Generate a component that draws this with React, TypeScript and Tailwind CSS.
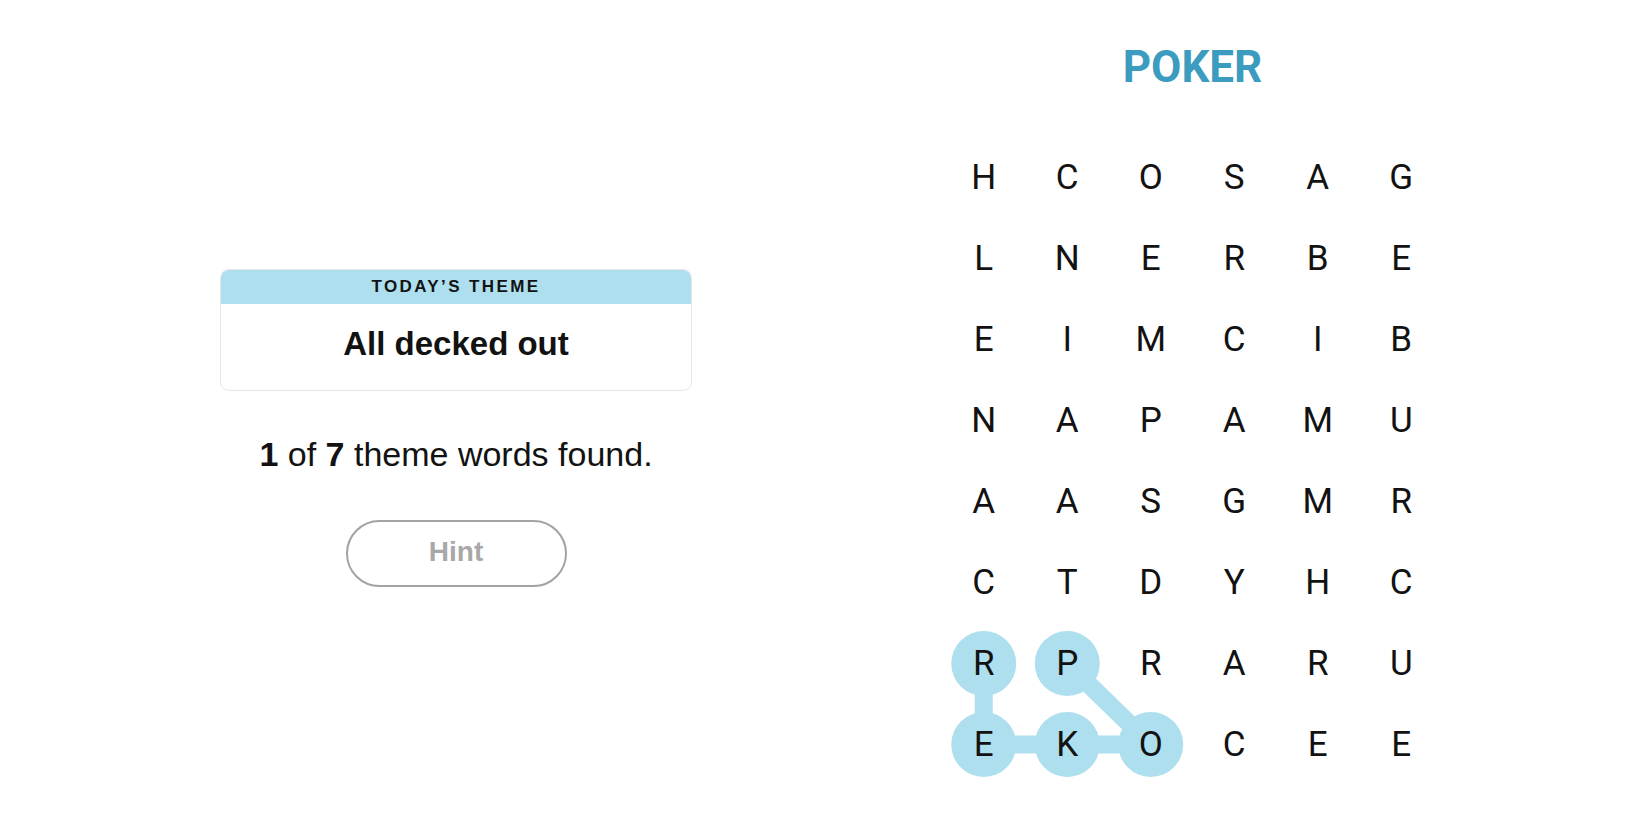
import React from 'react'

const grid = [
  ['H', 'C', 'O', 'S', 'A', 'G'],
  ['L', 'N', 'E', 'R', 'B', 'E'],
  ['E', 'I', 'M', 'C', 'I', 'B'],
  ['N', 'A', 'P', 'A', 'M', 'U'],
  ['A', 'A', 'S', 'G', 'M', 'R'],
  ['C', 'T', 'D', 'Y', 'H', 'C'],
  ['R', 'P', 'R', 'A', 'R', 'U'],
  ['E', 'K', 'O', 'C', 'E', 'E']
]

const COL = 83.5
const ROW = 81

// found word path: P O K E R  as [row, col]
const found: [number, number][] = [
  [6, 1],
  [7, 2],
  [7, 1],
  [7, 0],
  [6, 0]
]

const cx = (c: number) => c * COL + COL / 2
const cy = (r: number) => r * ROW + ROW / 2

const App: React.FC = () => {
  return (
    <div className="min-h-screen w-full bg-white text-[#121212] flex" style={{ fontFamily: '"Liberation Sans", Arial, sans-serif' }}>
      {/* Left panel */}
      <div className="ml-[220px] w-[472px] pt-[269px] flex flex-col items-center">
        <div className="w-full rounded-[9px] border border-[#e6e6e6] overflow-hidden">
          <div className="h-[34px] bg-[#aedfee] flex items-center justify-center text-[17px] font-semibold tracking-[2.4px] text-[#121212]">
            TODAY’S THEME
          </div>
          <div className="h-[86px] pb-[6px] flex items-center justify-center text-[33px] font-bold">All decked out</div>
        </div>
        <p className="mt-[43px] text-[34px] leading-[40px]">
          <span className="font-bold">1</span> of <span className="font-bold">7</span> theme words found.
        </p>
        <button className="mt-[46px] w-[221px] h-[67px] pb-[3px] rounded-full border-2 border-[#a3a3a3] text-[28px] font-bold text-[#a8a8a8]">
          Hint
        </button>
      </div>

      {/* Right panel */}
      <div className="ml-[250px] flex flex-col items-center" style={{ fontFamily: 'Roboto, "Liberation Sans", sans-serif' }}>
        <h1 className="pt-[41px] text-[44px] leading-[52px] font-bold text-[#3c9cc0]">POKER</h1>
        <div className="relative mt-[44px]">
          <svg className="absolute inset-0" width={COL * 6} height={ROW * 8}>
            {found.slice(1).map(([r, c], i) => {
              const [pr, pc] = found[i]
              return (
                <line
                  key={i}
                  x1={cx(pc)}
                  y1={cy(pr)}
                  x2={cx(c)}
                  y2={cy(r)}
                  stroke="#aedfee"
                  strokeWidth={18}
                />
              )
            })}
            {found.map(([r, c]) => (
              <circle key={`${r}-${c}`} cx={cx(c)} cy={cy(r)} r={32.5} fill="#aedfee" />
            ))}
          </svg>
          <div className="relative grid grid-cols-[repeat(6,83.5px)] auto-rows-[81px]">
            {grid.map((row, r) =>
              row.map((ch, c) => (
                <div key={`${r}-${c}`} className="flex items-center justify-center text-[35px] leading-none text-[#121212]">
                  {ch}
                </div>
              ))
            )}
          </div>
        </div>
      </div>
    </div>
  )
}

export default App
